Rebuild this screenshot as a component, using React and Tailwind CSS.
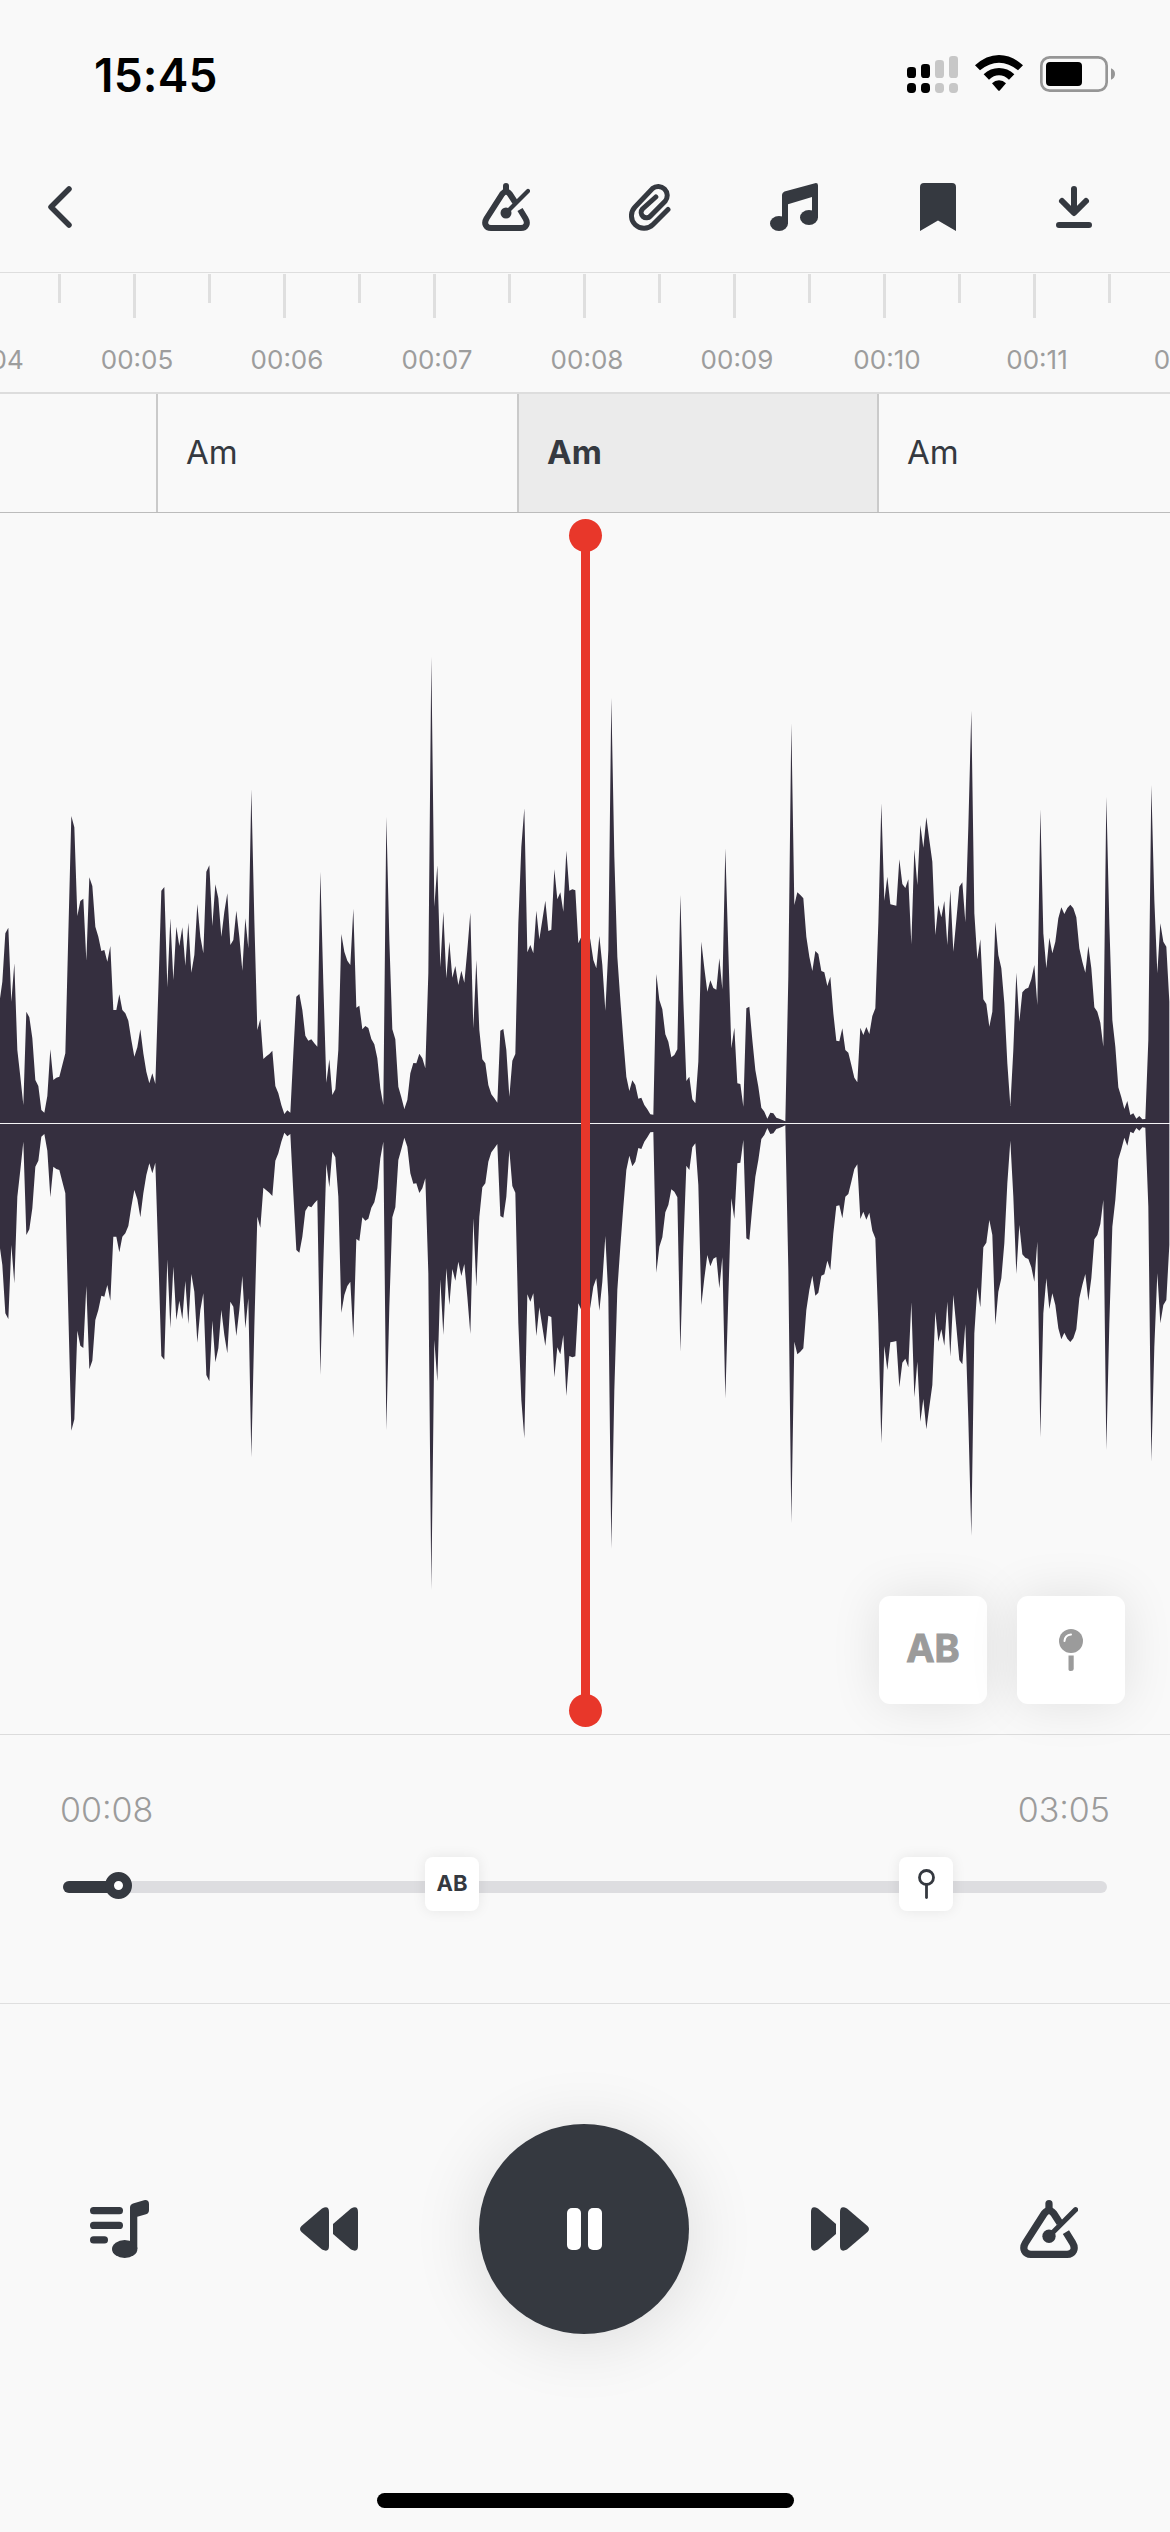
import React from 'react';

const SECONDS = ['00:04', '00:05', '00:06', '00:07', '00:08', '00:09', '00:10', '00:11', '00:12'];

const CHORDS = [
  { name: '', width: 'w-[156px]' },
  { name: 'Am', width: 'w-[361px]' },
  { name: 'Am', width: 'w-[360px]', active: true },
  { name: 'Am', width: 'w-[293px]' },
];

// Upper edge of the waveform, one sample every 9 units (3 units = 1px)
const SAMPLE_STEP = 9;
const CENTER = 1450;
const SAMPLES = [
  1090, 1025, 880, 863, 1085, 970, 1230, 1310, 1395, 1115, 1132, 1195, 1320, 1338, 1410, 1418, 1368, 1228, 1320, 1313,
  1310, 1275, 1240, 880, 528, 562, 828, 783, 776, 962, 712, 738, 860, 890, 933, 930, 965, 918, 1110, 1110,
  1063, 1110, 1120, 1142, 1200, 1250, 1222, 1168, 1240, 1295, 1330, 1300, 1332, 1050, 752, 741, 1042, 835, 1020, 860,
  918, 862, 977, 848, 998, 945, 792, 890, 940, 695, 676, 858, 733, 775, 890, 815, 760, 915, 900, 812,
  890, 992, 835, 925, 448, 840, 1170, 1137, 1257, 1249, 1242, 1232, 1338, 1360, 1395, 1422, 1411, 1418, 1240, 1070,
  1062, 1110, 1187, 1202, 1198, 1210, 1220, 695, 1030, 1328, 1258, 1365, 1348, 1230, 882, 935, 962, 975, 806, 1103,
  1097, 1168, 1158, 1164, 1197, 1213, 1255, 1345, 1395, 530, 900, 1168, 1198, 1340, 1372, 1407, 1380, 1300, 1269, 1270,
  1241, 1255, 1285, 1000, 50, 800, 676, 982, 815, 1015, 905, 1013, 978, 1035, 992, 1028, 930, 818, 1165, 960,
  1170, 1258, 1270, 1335, 1363, 1375, 1388, 1172, 1167, 1230, 1370, 1262, 1242, 850, 620, 505, 937, 915, 940, 812,
  898, 840, 782, 873, 869, 688, 778, 757, 815, 632, 752, 748, 751, 910, 890, 860, 850, 900, 960, 985,
  888, 975, 1112, 930, 173, 650, 950, 1080, 1200, 1310, 1353, 1321, 1335, 1376, 1373, 1395, 1408, 1423, 1424, 1002,
  1080, 1108, 1183, 1205, 1252, 1245, 1228, 765, 1080, 1323, 1310, 1378, 1390, 1265, 905, 985, 1055, 1021, 1044, 1049,
  955, 1048, 625, 930, 1225, 1163, 1330, 1332, 1400, 1105, 1100, 1200, 1290, 1340, 1403, 1415, 1436, 1418, 1420, 1433,
  1436, 1440, 1444, 1010, 250, 795, 757, 765, 775, 890, 950, 993, 933, 942, 993, 997, 1038, 1010, 1120, 1202,
  1204, 1165, 1230, 1238, 1275, 1313, 1327, 1163, 1185, 1161, 1182, 1128, 1105, 850, 490, 782, 710, 793, 795, 797,
  658, 732, 744, 718, 913, 628, 735, 555, 623, 532, 600, 665, 885, 795, 832, 783, 915, 750, 935, 840,
  740, 727, 847, 560, 212, 820, 958, 898, 1078, 1092, 1160, 1115, 845, 945, 985, 1090, 1270, 1398, 1230, 998,
  1145, 1057, 1047, 1043, 1018, 975, 1095, 508, 880, 985, 893, 940, 905, 835, 802, 822, 804, 794, 805, 832,
  925, 965, 998, 918, 985, 1102, 1115, 1148, 1220, 470, 850, 1140, 1220, 1342, 1372, 1407, 1383, 1425, 1420, 1436,
  1428, 1438, 1437, 1200, 435, 780, 1000, 850, 905, 920, 1085,
];

const buildWavePath = () => {
  const top = SAMPLES.map((y, i) => `${i * SAMPLE_STEP - 2} ${y}`);
  const bottom = SAMPLES.map((y, i) => `${i * SAMPLE_STEP - 2} ${CENTER * 2 - y}`).reverse();
  return `M${top.join('L')}L${bottom.join('L')}Z`;
};

const Waveform = () => (
  <svg className="block w-[1170px] h-[1220px]" viewBox="0 -381 3510 3660">
    <path d={buildWavePath()} fill="#352f3f" />
    <rect x="0" y="1449" width="3510" height="3" fill="#f4f4f6" />
  </svg>
);

const MetronomeIcon = ({ className }) => (
  <svg className={className} viewBox="0 0 48 48" fill="none" stroke="currentColor" strokeLinecap="round" strokeLinejoin="round">
    <path d="M24 3V8" strokeWidth="6" />
    <path d="M33 19L27.8 11Q24 6.500 20.200 11L4.500 35.500C1.500 40.500 4 45 9 45H39C44 45 46.500 40.500 43.500 35.500L38 26.500" strokeWidth="6" strokeLinecap="butt" />
    <path d="M46 8L24 30" strokeWidth="4.200" />
    <circle cx="24" cy="30" r="5.500" fill="currentColor" stroke="none" />
  </svg>
);

const ClipIcon = () => (
  <svg className="w-[42px] h-12" viewBox="0 0 42 48" fill="none" stroke="currentColor" strokeWidth="5" strokeLinecap="round">
    <path d="M39 26.500L24 41.500A12.300 12.300 0 0 1 6 24L23.500 5.500A9 9 0 0 1 36.300 18L21.500 33A5.300 5.300 0 0 1 13.500 26L26.800 14" />
  </svg>
);

const NotesIcon = () => (
  <svg className="size-12" viewBox="0 0 48 48" fill="currentColor">
    <path d="M12 12Q12 9.500 14.500 8.500L45 .2Q48 -.4 48 2.500V34.500H42V14L18 21.200V40.500H12Z" />
    <ellipse cx="9" cy="40.500" rx="9" ry="7.500" />
    <ellipse cx="39" cy="34.500" rx="9" ry="7.500" />
  </svg>
);

const StatusIcons = () => (
  <svg className="w-[240px] h-[70px]" viewBox="0 0 720 210">
    <rect x="51" y="81" width="27" height="33" rx="10" />
    <rect x="93" y="72" width="27" height="42" rx="10" />
    <rect x="51" y="129" width="27" height="30" rx="11" />
    <rect x="93" y="129" width="27" height="30" rx="11" />
    <g fill="#c7c7c7">
      <rect x="135" y="60" width="27" height="54" rx="10" />
      <rect x="177" y="48" width="27" height="66" rx="10" />
      <rect x="135" y="129" width="27" height="30" rx="11" />
      <rect x="177" y="129" width="27" height="30" rx="11" />
    </g>
    <path d="M255 76Q289 45 327 45T399 76L384 91Q357 68 327 68T270 91Z" />
    <path d="M281 103Q301 84 327 84T373 103L357 119Q343 106 327 106T297 119Z" />
    <path d="M306 130Q315 121 327 121T348 130L330 151Q327 154 324 151Z" />
    <rect x="454" y="52" width="196" height="100" rx="25" fill="none" stroke="#969696" strokeWidth="8" />
    <rect x="468" y="66" width="108" height="72" rx="12" />
    <path d="M663 85Q675 90 675 102T663 119Z" fill="#969696" />
  </svg>
);

const RewindIcon = ({ className }) => (
  <svg className={className} viewBox="0 0 58 44" fill="currentColor">
    <path d="M1.500 19L22 1.500Q29 -2 29 5V39Q29 46 22 42.500L1.500 25Q-1.500 22 1.500 19Z" />
    <path d="M33 17L51 1.500Q58 -2 58 5V39Q58 46 51 42.500L33 27Z" />
  </svg>
);

const PlaylistIcon = () => (
  <svg className="w-[59px] h-[58px]" viewBox="0 0 59 58" fill="currentColor">
    <rect x="0" y="7" width="33" height="7.300" rx="3.600" />
    <rect x="0" y="21.700" width="33" height="7.300" rx="3.600" />
    <rect x="0" y="36.300" width="18" height="7.300" rx="3.600" />
    <path d="M40 7.500Q40 4.500 43 3.500L54 .2Q59 -.5 59 4V10Q59 13.500 56 14.300L47.300 16.800V49H40Z" />
    <ellipse cx="34.700" cy="49" rx="12.700" ry="9" />
  </svg>
);

export default function App() {
  return (
    <div className="w-[1170px] h-[2532px] bg-[#f9f9f9] text-[#353940] overflow-hidden flex flex-col font-['Inter',sans-serif]">
      {/* Status bar */}
      <div className="h-[144px] flex justify-between pl-[94px] pr-[40px] pt-10 text-black shrink-0">
        <span className="text-[46px] leading-[70px] font-semibold tracking-[0.2px]">15:45</span>
        <StatusIcons />
      </div>

      {/* Toolbar */}
      <header className="h-[129px] flex items-center pl-12 pr-[78px] pb-[3px] border-b border-[#dedede] shrink-0">
        <svg className="w-6 h-[42px] mr-auto" viewBox="0 0 24 42" fill="none" stroke="currentColor" strokeWidth="5.500" strokeLinecap="round" strokeLinejoin="round">
          <path d="M21 3L3 21L21 39" />
        </svg>
        <MetronomeIcon className="size-12 mr-[99px]" />
        <ClipIcon />
        <div className="ml-[99px] mr-[102px]">
          <NotesIcon />
        </div>
        <svg className="w-9 h-12 mr-[100px]" viewBox="0 0 36 48" fill="currentColor">
          <path d="M0 4Q0 0 4 0H32Q36 0 36 4V48L18 37.500L0 48Z" />
        </svg>
        <svg className="w-9 h-[42px]" viewBox="0 0 36 42" fill="none" stroke="currentColor" strokeWidth="6" strokeLinecap="round" strokeLinejoin="round">
          <path d="M18 3V26M6 15L18 27L30 15M3 39H33" />
        </svg>
      </header>

      {/* Time ruler */}
      <div className="h-[121px] flex -ml-[92px] w-[1350px] border-b-2 border-[#dddddd] shrink-0">
        {SECONDS.map((label) => (
          <div key={label} className="w-[150px] shrink-0 pt-px">
            <div className="flex items-start h-[66px]">
              <div className="w-[3px] h-[29px] bg-[#dfdfdf]" />
              <div className="w-[3px] h-11 ml-[72px] bg-[#dfdfdf]" />
            </div>
            <div className="text-center text-[26px] leading-[40px] pl-[8px] text-[#9d9d9d]">{label}</div>
          </div>
        ))}
      </div>

      {/* Chords */}
      <div className="h-[119px] flex border-b border-[#bcbcbc] shrink-0">
        {CHORDS.map((chord, i) => (
          <div
            key={i}
            className={`${chord.width} shrink-0 flex items-center text-[33px] ${i > 0 ? 'border-l-2 border-[#cacaca] pl-[28px]' : ''} ${chord.active ? 'bg-[#ebebeb] font-bold' : ''}`}
          >
            {chord.name}
          </div>
        ))}
      </div>

      {/* Waveform */}
      <div className="relative h-[1222px] border-b border-[#dcdcdc] shrink-0">
        <Waveform />
        <div className="absolute left-[569px] top-[6px] w-[33px] h-[1208px] flex flex-col items-center justify-between">
          <div className="absolute inset-y-4 left-3 w-[9px] bg-[#e8372a]" />
          <div className="size-[33px] rounded-full bg-[#e8372a]" />
          <div className="size-[33px] rounded-full bg-[#e8372a]" />
        </div>
        <div className="absolute right-[45px] bottom-[30px] flex gap-[30px] text-[#9b9b9b]">
          <button className="size-[108px] rounded-[11px] bg-white shadow-[0_0_50px_rgba(0,0,0,0.1)] pb-1 text-[38px] font-bold [-webkit-text-stroke:1px_#9b9b9b]">AB</button>
          <button className="size-[108px] rounded-[11px] bg-white shadow-[0_0_50px_rgba(0,0,0,0.1)] flex items-center justify-center">
            <svg className="w-6 h-[42px]" viewBox="0 0 24 42">
              <circle cx="12" cy="12" r="12" fill="currentColor" />
              <path d="M5.500 12Q6 6 12 5.500" fill="none" stroke="#fff" strokeWidth="2" strokeLinecap="round" />
              <path d="M9.500 26.500H14.700V40Q14.700 42 12 42T9.500 40Z" fill="currentColor" />
            </svg>
          </button>
        </div>
      </div>

      {/* Progress */}
      <div className="h-[269px] border-b border-[#dfdfdf] shrink-0 pt-[53px]">
        <div className="flex justify-between pl-[60px] pr-[60px] text-[34px] leading-[44px] text-[#9c9c9c] font-light">
          <span>00:08</span>
          <span>03:05</span>
        </div>
        <div className="relative mt-[49px] mx-[63px] h-3 rounded-full bg-[#dddde0]">
          <div className="w-[50px] h-3 rounded-full bg-[#353940]" />
          <div className="absolute left-[42px] -top-[9px] size-[27px] rounded-full border-[9px] border-[#353940] bg-white" />
          <div className="absolute left-[362px] -top-6 size-[54px] rounded-lg bg-white shadow-[0_0_14px_rgba(0,0,0,0.08)] flex items-center justify-center pb-0.5 text-[22px] font-bold">AB</div>
          <div className="absolute left-[836px] -top-6 size-[54px] rounded-lg bg-white shadow-[0_0_14px_rgba(0,0,0,0.08)] flex items-center justify-center">
            <svg className="w-[18px] h-[30px]" viewBox="0 0 18 30" fill="none" stroke="currentColor" strokeWidth="2.800" strokeLinecap="round">
              <circle cx="9.500" cy="8.500" r="7" />
              <path d="M9.500 16V28.500" />
            </svg>
          </div>
        </div>
      </div>

      {/* Playback controls */}
      <div className="flex items-center justify-between pl-[90px] pr-[92px] pt-[120px] shrink-0">
        <PlaylistIcon />
        <RewindIcon className="w-[58px] h-11 ml-[29px]" />
        <button className="size-[210px] rounded-full bg-[#353940] shadow-[0_6px_70px_rgba(0,0,0,0.12)] flex items-center justify-center gap-[7px]">
          <span className="w-[14px] h-[42px] rounded-[5px] bg-white" />
          <span className="w-[14px] h-[42px] rounded-[5px] bg-white" />
        </button>
        <RewindIcon className="w-[58px] h-11 rotate-180 mr-[30px]" />
        <MetronomeIcon className="size-[58px]" />
      </div>

      <div className="mt-auto mb-6 mx-auto w-[417px] h-[15px] rounded-full bg-black shrink-0" />
    </div>
  );
}
